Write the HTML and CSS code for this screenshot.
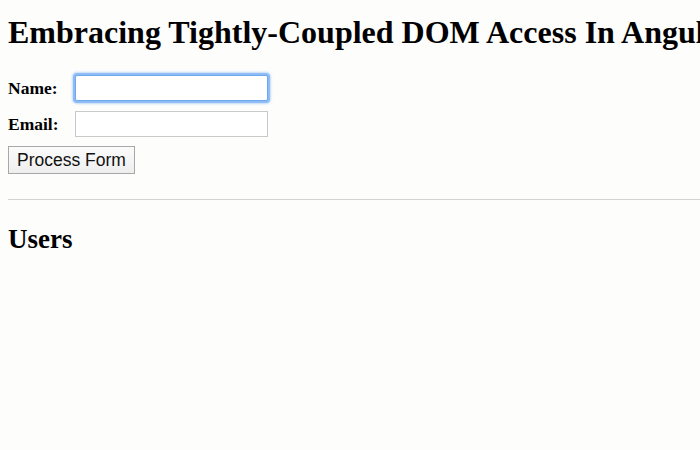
FILE: index.html
```html
<!DOCTYPE html>
<html lang="en">
<head>
<meta charset="utf-8">
<title>Embracing Tightly-Coupled DOM Access In Angular 2</title>
<link rel="stylesheet" href="styles.css">
</head>
<body>
<h1 class="title">Embracing Tightly-Coupled DOM Access In Angular 2 Beta 1</h1>
<form class="form">
  <div class="row">
    <label class="label" for="name">Name:</label>
    <input class="field is-focused" id="name" type="text">
  </div>
  <div class="row">
    <label class="label" for="email">Email:</label>
    <input class="field" id="email" type="text">
  </div>
  <div class="actions">
    <button class="button" type="button">Process Form</button>
  </div>
</form>
<hr class="divider">
<h2 class="subtitle">Users</h2>
</body>
</html>
```

FILE: styles.css
```css
html {
  overflow: hidden;
  background: #fdfdfc;
}

body {
  margin: 0 0 0 8px;
  font-family: "Liberation Serif", "Times New Roman", serif;
  color: #000;
  background: #fdfdfc;
}

.title {
  margin: 14px 0 25px;
  font-size: 32px;
  line-height: 36px;
  font-weight: bold;
  white-space: nowrap;
}

.form {
  margin: 0;
}

.row {
  display: grid;
  grid-template-columns: 67px 193px;
  align-items: center;
  margin-bottom: 10px;
}

.label {
  font-size: 17.5px;
  line-height: 20px;
  font-weight: bold;
}

.field {
  box-sizing: border-box;
  width: 193px;
  height: 26px;
  margin: 0;
  padding: 2px 4px;
  border: 1px solid #c9c9c9;
  border-radius: 0;
  background: #fff;
  font-family: "Liberation Sans", Arial, sans-serif;
  font-size: 15px;
  outline: none;
}

.field.is-focused {
  border-color: #6ea6ee;
  border-radius: 2px;
  box-shadow: 0 0 0 2px #8dbcf7, 0 0 2px 3px rgba(140, 185, 245, 0.5);
}

.actions {
  margin-top: -1px;
}

.button {
  box-sizing: border-box;
  height: 28px;
  margin: 0;
  padding: 0 8px;
  border: 1px solid #a8a8a8;
  border-radius: 0;
  background: linear-gradient(#fbfbfb, #eeeeee);
  color: #111;
  font-family: "Liberation Sans", Arial, sans-serif;
  font-size: 17.5px;
  line-height: 26px;
}

.divider {
  margin: 25px 0 0;
  border: 0;
  border-top: 1px solid #d3d3d3;
  height: 0;
}

.subtitle {
  margin: 24px 0 0;
  font-size: 27px;
  line-height: 31px;
  font-weight: bold;
}
```
